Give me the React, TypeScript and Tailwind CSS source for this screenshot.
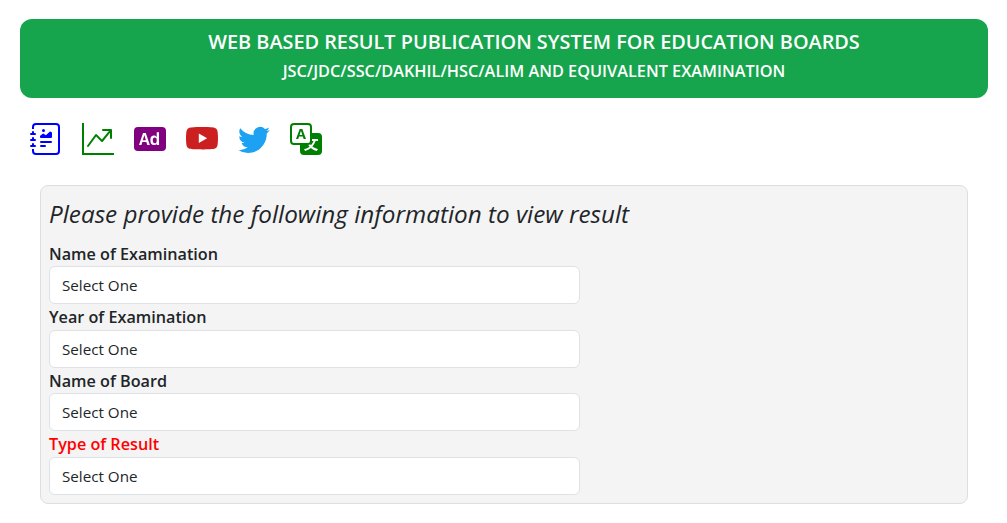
import React from 'react';
import { BsJournalRichtext, BsGraphUpArrow, BsBadgeAdFill, BsYoutube, BsTwitter, BsTranslate } from 'react-icons/bs';

const FIELDS = [
  { label: 'Name of Examination', red: false },
  { label: 'Year of Examination', red: false },
  { label: 'Name of Board', red: false },
  { label: 'Type of Result', red: true },
];

export default function App() {
  return (
    <div className="w-[1007px] h-[523px] overflow-hidden bg-white font-['Open_Sans',sans-serif] text-[#212529]">
      <div className="mx-5 mt-[19px] w-[968px] h-[79px] rounded-xl bg-[#16a54d] text-white text-center font-semibold pl-[60px] pt-2">
        <div className="text-[19.85px] leading-[30px]">WEB BASED RESULT PUBLICATION SYSTEM FOR EDUCATION BOARDS</div>
        <div className="text-[16.3px] leading-[28px]">JSC/JDC/SSC/DAKHIL/HSC/ALIM AND EQUIVALENT EXAMINATION</div>
      </div>

      <div className="flex gap-5 pl-[30px] pt-[25px] h-[87px]">
        <BsJournalRichtext className="w-8 h-8 text-[#0000ff]" />
        <BsGraphUpArrow className="w-8 h-8 text-[#008000]" />
        <BsBadgeAdFill className="w-8 h-8 text-[#800080]" />
        <BsYoutube className="w-8 h-8 text-[#cc2020]" />
        <BsTwitter className="w-8 h-8 text-[#1da1f2]" />
        <BsTranslate className="w-8 h-8 text-[#008000]" />
      </div>

      <div className="ml-10 w-[928px] h-[319px] rounded-lg border border-[#dedede] bg-[#f4f4f4] px-2 pt-[9px]">
        <h1 className="text-[24.25px] leading-[38px] italic mb-[7.5px]">Please provide the following information to view result</h1>
        <div className="flex flex-col w-[531px]">
          {FIELDS.map(f => (
            <div key={f.label} className="flex flex-col">
              <label className={`text-[16.2px] font-semibold leading-[24.5px] pt-px ${f.red ? 'text-[#ff0000]' : ''}`}>{f.label}</label>
              <div className="h-[38px] rounded-md border border-[#dee2e6] bg-white pl-3 text-[15.2px] leading-[36px]">Select One</div>
            </div>
          ))}
        </div>
      </div>
    </div>
  );
}
